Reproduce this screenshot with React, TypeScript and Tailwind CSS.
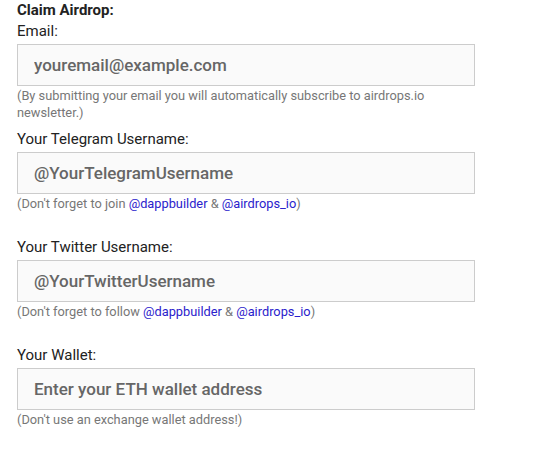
function Field({
  label,
  placeholder,
  children,
  className = "",
}: {
  label: string;
  placeholder: string;
  children: React.ReactNode;
  className?: string;
}) {
  return (
    <div className={className}>
      <label className="block text-[15px] leading-[22px] text-[#222]">{label}</label>
      <input
        type="text"
        placeholder={placeholder}
        className="block w-[458px] h-[42px] mt-[2px] px-[16px] border border-[#cccccc] bg-[#fafafa] text-[17px] font-medium text-[#555] placeholder:text-[#666] outline-none"
      />
      <p className="w-[458px] text-[12.8px] leading-[17px] text-[#777] mt-[1px]">{children}</p>
    </div>
  );
}

function Link({ children }: { children: React.ReactNode }) {
  return (
    <a href="#" className="text-[#2b22cc]">
      {children}
    </a>
  );
}

export default function App() {
  return (
    <div
      className="w-[534px] h-[449px] bg-white pl-[17px] pt-0"
      style={{ fontFamily: "Roboto, 'Liberation Sans', sans-serif" }}
    >
      <h3 className="text-[15px] leading-[20px] font-bold text-[#222]">Claim Airdrop:</h3>
      <Field label="Email:" placeholder="youremail@example.com">
        (By submitting your email you will automatically subscribe to airdrops.io
        newsletter.)
      </Field>
      <Field label="Your Telegram Username:" placeholder="@YourTelegramUsername" className="mt-[7px]">
        (Don't forget to join <Link>@dappbuilder</Link> &amp; <Link>@airdrops_io</Link>)
      </Field>
      <Field label="Your Twitter Username:" placeholder="@YourTwitterUsername" className="mt-[24px]">
        (Don't forget to follow <Link>@dappbuilder</Link> &amp; <Link>@airdrops_io</Link>)
      </Field>
      <Field label="Your Wallet:" placeholder="Enter your ETH wallet address" className="mt-[24px]">
        (Don't use an exchange wallet address!)
      </Field>
    </div>
  );
}
